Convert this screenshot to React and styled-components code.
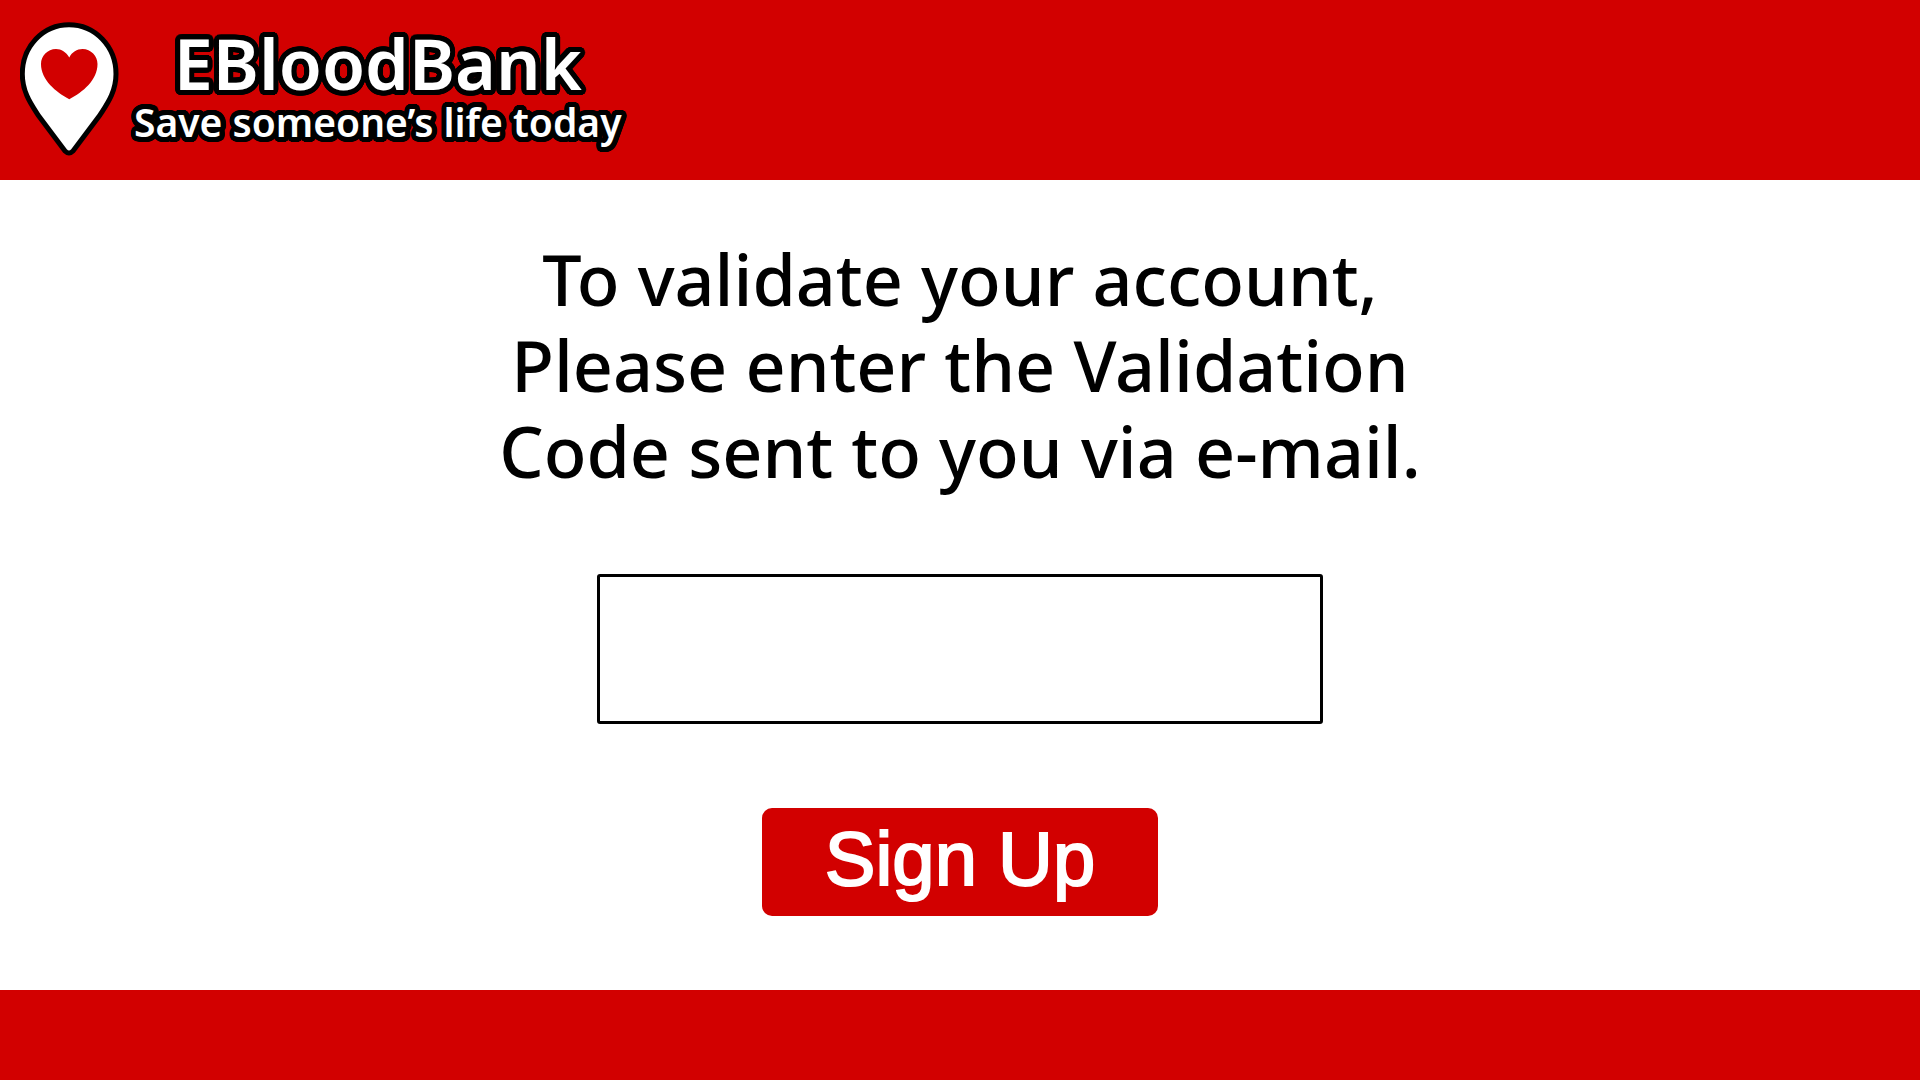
import React from "react";
import styled, { createGlobalStyle } from "styled-components";

const red = "#d20000";

// A ring of shadows gives the lettering a black outline with round corners.
const outline = (radius) =>
  Array.from({ length: 32 }, (_, i) => {
    const angle = (i * Math.PI) / 16;
    const x = (Math.cos(angle) * radius).toFixed(2);
    const y = (Math.sin(angle) * radius).toFixed(2);
    return `${x}px ${y}px 0 #000`;
  }).join(", ");

const GlobalStyle = createGlobalStyle`
  *, *::before, *::after { box-sizing: border-box; }
  body {
    margin: 0;
    background: #fff;
    color: #000;
    font-family: "Noto Sans", "Open Sans", sans-serif;
  }
`;

const Page = styled.div`
  display: flex;
  flex-direction: column;
  min-height: 100vh;
`;

const Header = styled.header`
  display: flex;
  align-items: center;
  gap: 14px;
  min-height: 180px;
  padding: 0 20px;
  background: ${red};
`;

const Pin = styled.svg`
  flex: none;
  width: 100px;
  height: 136px;
`;

const Brand = styled.div`
  display: flex;
  flex-direction: column;
  align-items: center;
  color: #fff;
  font-weight: 600;
  text-shadow: ${outline(5)};
`;

const Name = styled.h1`
  margin: 0;
  font-size: 70px;
  line-height: 64px;
  font-weight: inherit;
`;

const Tagline = styled.p`
  margin: 0;
  font-size: 39px;
  line-height: 54px;
`;

const Main = styled.main`
  flex: 1;
  padding: 56px 24px;
`;

const Form = styled.form`
  display: flex;
  flex-direction: column;
  align-items: center;
`;

const Prompt = styled.label`
  margin-bottom: 80px;
  font-size: 70px;
  line-height: 86px;
  font-weight: 500;
  text-align: center;
`;

const CodeInput = styled.input`
  width: 726px;
  max-width: 100%;
  height: 150px;
  margin-bottom: 84px;
  padding: 0 32px;
  border: 3px solid #000;
  border-radius: 3px;
  background: #fff;
  font: inherit;
  font-size: 70px;
  text-align: center;
`;

const SubmitButton = styled.button`
  min-width: 396px;
  height: 108px;
  padding: 0 48px 6px;
  border: 0;
  border-radius: 10px;
  background: ${red};
  color: #fff;
  font-family: "Liberation Sans", Arial, sans-serif;
  font-size: 76px;
  line-height: 86px;
  -webkit-text-stroke: 2px #fff;
  cursor: pointer;
`;

const Footer = styled.footer`
  height: 90px;
  background: ${red};
`;

export default function App() {
  return (
    <Page>
      <GlobalStyle />
      <Header>
        <Pin viewBox="20 22 100 136" aria-hidden="true">
          <path
            d="M69 24.8C43 24.8 22.3 46.5 22.3 74C22.3 92 31 104 38 115L65 151Q69 155 73 151L100 115C107 104 116 92 116 74C116 46.5 95 24.8 69 24.8Z"
            fill="#fff"
            stroke="#000"
            strokeWidth="5"
            strokeLinejoin="round"
          />
          <path
            d="M69.3 57.5C66 52 61.5 49 56 49C47.5 49 41 56 41 64C41 80 56 92 69.3 99.3C83 92 97.5 80 97.5 64C97.5 56 91 49 82.5 49C77 49 72 52 69.3 57.5Z"
            fill={red}
          />
        </Pin>
        <Brand>
          <Name>EBloodBank</Name>
          <Tagline>Save someone’s life today</Tagline>
        </Brand>
      </Header>
      <Main>
        <Form onSubmit={(event) => event.preventDefault()}>
          <Prompt htmlFor="code">
            To validate your account,
            <br />
            Please enter the Validation
            <br />
            Code sent to you via e-mail.
          </Prompt>
          <CodeInput id="code" name="code" type="text" autoComplete="one-time-code" />
          <SubmitButton type="submit">Sign Up</SubmitButton>
        </Form>
      </Main>
      <Footer />
    </Page>
  );
}
